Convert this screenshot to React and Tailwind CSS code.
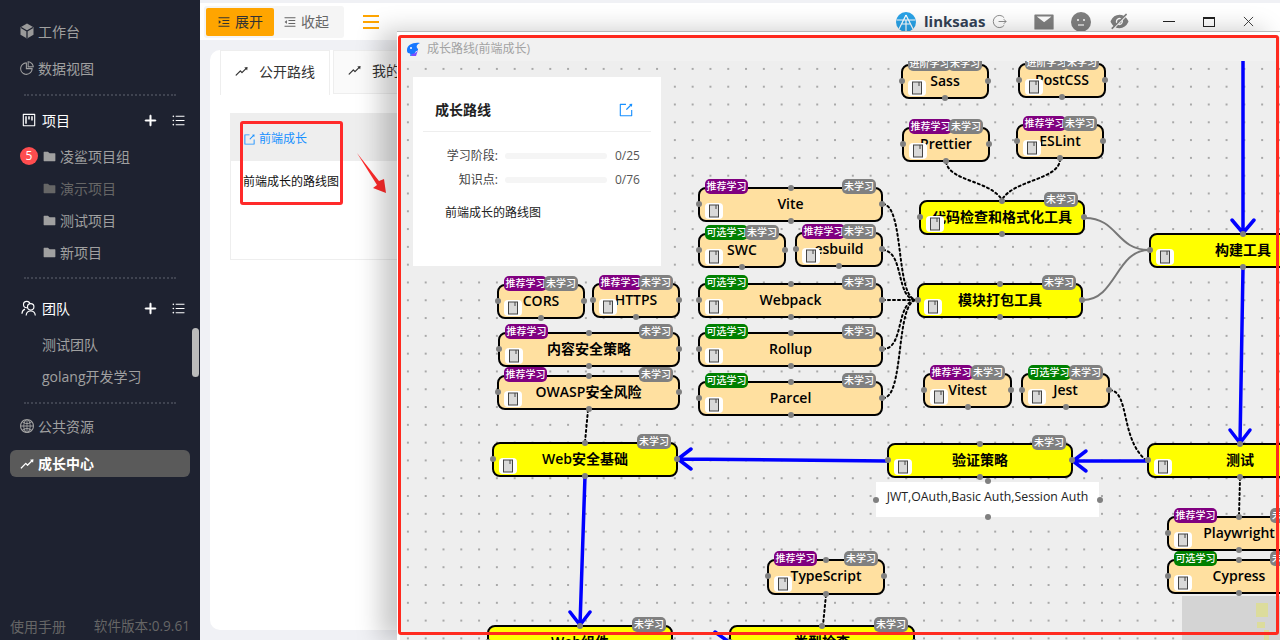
import React from "react";
import {
  AiFillFolder,
  AiFillMail,
  AiFillEyeInvisible,
  AiOutlineExport,
  AiOutlineGlobal,
  AiOutlineMenuFold,
  AiOutlineMenuUnfold,
  AiOutlinePieChart,
  AiOutlinePlus,
  AiOutlineProject,
  AiOutlineRise,
  AiOutlineUnorderedList,
} from "react-icons/ai";

const tagColor = {
  推荐学习: "bg-[#800080]",
  可选学习: "bg-[#008000]",
  进阶学习: "bg-[#808080]",
};

// page coordinates, the canvas subtracts its own origin
const nodes = [
  { t: "Sass", x: 901, y: 64, w: 88, h: 35, tag: "进阶学习" },
  { t: "PostCSS", x: 1018, y: 63, w: 88, h: 35, tag: "进阶学习" },
  { t: "Prettier", x: 902, y: 127, w: 88, h: 35, tag: "推荐学习" },
  { t: "ESLint", x: 1016, y: 124, w: 88, h: 35, tag: "推荐学习" },
  { t: "代码检查和格式化工具", x: 919, y: 200, w: 166, h: 35, main: true },
  { t: "构建工具", x: 1149, y: 233, w: 188, h: 35, main: true },
  { t: "Vite", x: 698, y: 187, w: 185, h: 35, tag: "推荐学习" },
  { t: "SWC", x: 698, y: 233, w: 88, h: 35, tag: "可选学习" },
  { t: "esbuild", x: 795, y: 232, w: 88, h: 35, tag: "推荐学习" },
  { t: "Webpack", x: 698, y: 283, w: 185, h: 35, tag: "可选学习" },
  { t: "Rollup", x: 698, y: 332, w: 185, h: 35, tag: "可选学习" },
  { t: "Parcel", x: 698, y: 381, w: 185, h: 35, tag: "可选学习" },
  { t: "模块打包工具", x: 917, y: 283, w: 166, h: 35, main: true },
  { t: "CORS", x: 497, y: 284, w: 88, h: 35, tag: "推荐学习" },
  { t: "HTTPS", x: 592, y: 283, w: 88, h: 35, tag: "推荐学习" },
  { t: "内容安全策略", x: 498, y: 332, w: 182, h: 35, tag: "推荐学习" },
  { t: "OWASP安全风险", x: 497, y: 375, w: 183, h: 35, tag: "推荐学习" },
  { t: "Vitest", x: 923, y: 373, w: 89, h: 35, tag: "推荐学习" },
  { t: "Jest", x: 1021, y: 373, w: 89, h: 35, tag: "可选学习" },
  { t: "Web安全基础", x: 492, y: 442, w: 186, h: 35, main: true },
  { t: "验证策略", x: 887, y: 443, w: 186, h: 35, main: true },
  { t: "测试", x: 1147, y: 443, w: 186, h: 35, main: true },
  { t: "Playwright", x: 1167, y: 516, w: 144, h: 35, tag: "推荐学习" },
  { t: "Cypress", x: 1167, y: 559, w: 144, h: 35, tag: "可选学习" },
  { t: "TypeScript", x: 767, y: 559, w: 118, h: 36, tag: "推荐学习" },
  { t: "Web组件", x: 487, y: 625, w: 186, h: 35, main: true },
  { t: "类型检查", x: 729, y: 625, w: 186, h: 35, main: true },
];

const Book = () => (
  <svg viewBox="0 0 18 16" className="block h-[16px] w-[18px]">
    <rect x="4.5" y="2" width="9" height="12" fill="#d9d9d9" stroke="#444" strokeWidth="1" />
    <path d="M11 2v4" stroke="#444" strokeWidth="1" />
  </svg>
);

const Handle = ({ className }) => (
  <span className={`absolute z-10 h-[6px] w-[6px] rounded-full bg-[#808080] ${className}`} />
);

const GraphNode = ({ n }) => (
  <div
    className={`absolute flex items-center justify-center rounded-[8px] border-2 border-black text-[14px] font-semibold text-black ${
      n.main ? "bg-[#ffff00]" : "bg-[#ffe0a0]"
    }`}
    style={{ left: n.x - 400, top: n.y - 61, width: n.w, height: n.h }}
  >
    <span className="-translate-y-px whitespace-nowrap leading-none">{n.t}</span>
    <Handle className="left-[-4px] top-[12px]" />
    <Handle className="right-[-4px] top-[12px]" />
    <Handle className="left-1/2 top-[-4px] -translate-x-1/2" />
    <Handle className="bottom-[-4px] left-1/2 -translate-x-1/2" />
    <span className="absolute bottom-[1px] left-[5px] z-10 rounded-[4px] bg-white">
      <Book />
    </span>
    {n.tag && (
      <span
        className={`absolute left-[5px] top-[-10px] z-20 flex h-[15px] w-[43px] items-center justify-center rounded-[5px] text-[10px] font-medium text-white ${tagColor[n.tag]}`}
      >
        {n.tag}
      </span>
    )}
    <span className="absolute right-[5px] top-[-10px] z-20 flex h-[15px] w-[34px] items-center justify-center rounded-[5px] bg-[#808080] text-[10px] font-medium text-white">
      未学习
    </span>
  </div>
);

const Edges = () => (
  <svg viewBox="400 61 880 579" className="absolute left-0 top-0 h-[579px] w-[880px]" fill="none">
    <g stroke="#000" strokeWidth="2" strokeDasharray="2 3" strokeLinecap="round">
      <path d="M946 162C950 182 990 180 1002 200" />
      <path d="M1060 159C1060 180 1012 180 1002 200" />
      <path d="M883 204C905 206 895 300 917 300" />
      <path d="M883 250C905 252 895 300 917 300" />
      <path d="M883 300H917" />
      <path d="M883 349C905 349 895 300 917 300" />
      <path d="M883 398C905 398 895 300 917 300" />
      <path d="M1110 390C1130 392 1120 440 1147 461" />
      <path d="M588 410L585 442" />
      <path d="M1240 478L1239 516" />
      <path d="M826 595L823 625" />
    </g>
    <g stroke="#777" strokeWidth="2">
      <path d="M1085 218C1118 218 1116 250 1149 250" />
      <path d="M1083 300C1116 300 1116 250 1149 250" />
    </g>
    <g stroke="#0000ff" strokeWidth="3.5" strokeLinecap="round" strokeLinejoin="round">
      <path d="M1243 61V233M1232 220L1243 233L1254 220" />
      <path d="M1243 268L1240 443M1230 430L1240 443L1250 430" />
      <path d="M1147 461H1073M1086 451L1073 461L1086 471" />
      <path d="M887 461L678 459M691 449L678 459L691 469" />
      <path d="M585 476L580 625M570 612L580 625L590 612" />
      <path d="M673 650L729 650M715 632L729 642" />
    </g>
  </svg>
);

const InfoPanel = () => (
  <div className="absolute left-[13px] top-[16px] z-30 h-[189px] w-[248px] bg-white px-[10px]">
    <div className="flex h-[55px] items-center justify-between border-b border-[#eeeeee] pl-[12px] pr-[17px] pt-[11px]">
      <span className="text-[14px] font-semibold text-[#222]">成长路线</span>
      <AiOutlineExport className="h-[16px] w-[16px] text-[#1890ff]" />
    </div>
    <div className="mt-[12px] flex h-[24px] items-center text-[12px] text-[#444]">
      <span className="w-[75px] text-right">学习阶段:</span>
      <span className="ml-[7px] h-[6px] w-[102px] rounded-full bg-[#f5f5f5]" />
      <span className="ml-[8px] text-[#555]">0/25</span>
    </div>
    <div className="flex h-[24px] items-center text-[12px] text-[#444]">
      <span className="w-[75px] text-right">知识点:</span>
      <span className="ml-[7px] h-[6px] w-[102px] rounded-full bg-[#f5f5f5]" />
      <span className="ml-[8px] text-[#555]">0/76</span>
    </div>
    <p className="ml-[22px] mt-[12px] text-[12px] text-[#222]">前端成长的路线图</p>
  </div>
);

const Note = () => (
  <div className="absolute left-[476px] top-[421px] z-10 flex h-[35px] w-[223px] items-start justify-center bg-white pt-[6px] text-[12.3px] text-[#222]">
    JWT,OAuth,Basic Auth,Session Auth
    <Handle className="right-[-4px] top-[15px]" />
    <Handle className="left-[-3px] top-[15px]" />
    <Handle className="left-1/2 top-[-4px] -translate-x-1/2" />
    <Handle className="bottom-[-3px] left-1/2 -translate-x-1/2" />
  </div>
);

const Minimap = () => (
  <div className="absolute left-[782px] top-[535px] z-40 h-[44px] w-[98px] bg-[#d4d4d4]">
    <div className="absolute left-[74px] top-[7px] h-[14px] w-[12px] bg-[#dcdc9c]" />
    <div className="absolute left-[75px] top-[26px] h-[6px] w-[8px] bg-[#dcdc9c]" />
    <div className="absolute left-[82px] top-[34px] h-[10px] w-[5px] bg-[#dcdc9c]" />
  </div>
);

const FlowWindow = () => (
  <div className="absolute left-[397px] top-[31px] z-40 flex h-[609px] w-[883px] flex-col border-t border-[#bbbbbb] bg-white pl-[3px] pt-[5px] shadow-[-16px_0_24px_rgba(0,0,0,0.22)]">
    <div className="flex h-[24px] items-center gap-[6px] bg-[#f1f1f1] pl-[5px] text-[12px] text-[#a3a3a3]">
      <svg viewBox="0 0 16 16" className="h-[16px] w-[16px]">
        <path d="M2 9C2 4 8 1 15 2C12 3 11 5 12 7C14 8 13 10 11 10C10 13 8 15 5 15C6 13 5 12 3 12C2 11 2 10 2 9Z" fill="#1677ff" />
        <path d="M6 13C9 13 11 12 13 9L11 15H7Z" fill="#7c4dff" />
        <circle cx="6" cy="7" r="1" fill="#fff" />
      </svg>
      <span>成长路线(前端成长)</span>
    </div>
    <div className="relative flex-1 overflow-hidden bg-[#eeeeee] bg-[radial-gradient(#a8a8a8_0.7px,transparent_0.9px)] bg-[size:17.8px_17.8px] bg-[position:-1px_-1px]">
      <Edges />
      {nodes.map((n) => (
        <GraphNode key={n.t} n={n} />
      ))}
      <Note />
      <InfoPanel />
      <Minimap />
    </div>
  </div>
);

const Divider = ({ className }) => (
  <div className={`mx-[24px] border-t-2 border-dotted border-[#3f4350] ${className}`} />
);

const NavItem = ({ icon, label, className }) => (
  <div className={`flex h-[28px] items-center gap-[3px] pl-[19px] text-[14px] text-[#a0a0a0] ${className}`}>
    {icon}
    <span>{label}</span>
  </div>
);

const GroupHead = ({ icon, label, className }) => (
  <div className={`flex h-[24px] items-center pl-[21px] pr-[14px] text-[14px] text-white ${className}`}>
    {icon}
    <span className="ml-[5px] flex-1">{label}</span>
    <AiOutlinePlus className="h-[15px] w-[15px] stroke-[60px]" />
    <AiOutlineUnorderedList className="ml-[13px] h-[15px] w-[15px]" />
  </div>
);

const Folder = ({ label, dim, badge }) => (
  <div className={`relative flex h-[32px] items-center pl-[42px] text-[14px] ${dim ? "text-[#666]" : "text-[#a0a0a0]"}`}>
    {badge && (
      <span className="absolute left-[20px] top-[7px] flex h-[18px] w-[18px] items-center justify-center rounded-full bg-[#ff4d4f] text-[12px] text-white">
        {badge}
      </span>
    )}
    <AiFillFolder className="mr-[3px] h-[15px] w-[15px]" />
    <span>{label}</span>
  </div>
);

const TeamIcon = () => (
  <svg viewBox="0 0 14 14" className="h-[16px] w-[16px]" fill="none" stroke="#fff" strokeWidth="1">
    <circle cx="5" cy="4" r="2.8" />
    <circle cx="8.5" cy="6" r="2.8" fill="#1e2230" />
    <path d="M0.8 12C1 9.5 2 8.5 3.5 8M4.5 13.5C4.7 10.8 6.5 9.6 8.5 9.6C10.5 9.6 12.3 10.8 12.5 13.5" />
  </svg>
);

const CubeIcon = () => (
  <svg viewBox="0 0 16 16" className="h-[16px] w-[16px]">
    <path d="M8 0.5L14.5 4.2V11.8L8 15.5L1.5 11.8V4.2Z" fill="#9a9a9a" />
    <path d="M2 4.5L8 8L14 4.5M8 8V15" stroke="#1e2230" strokeWidth="1.3" fill="none" />
  </svg>
);

const Sidebar = () => (
  <aside className="relative flex h-[640px] w-[200px] shrink-0 flex-col bg-[#1e2230] pt-[17px]">
    <NavItem icon={<CubeIcon />} label="工作台" className="mb-[9px]" />
    <NavItem icon={<AiOutlinePieChart className="h-[16px] w-[16px]" />} label="数据视图" />
    <Divider className="mt-[12px]" />
    <GroupHead icon={<AiOutlineProject className="h-[16px] w-[16px]" />} label="项目" className="mt-[12px]" />
    <div className="mt-[8px]">
      <Folder label="凌鲨项目组" badge="5" />
      <Folder label="演示项目" dim />
      <Folder label="测试项目" />
      <Folder label="新项目" />
    </div>
    <Divider className="mt-[9px]" />
    <GroupHead icon={<TeamIcon />} label="团队" className="mt-[17px]" />
    <div className="mt-[8px] text-[14px] text-[#a0a0a0]">
      <div className="flex h-[32px] items-center pl-[42px]">测试团队</div>
      <div className="flex h-[32px] items-center pl-[42px]">golang开发学习</div>
    </div>
    <Divider className="mt-[10px]" />
    <NavItem icon={<AiOutlineGlobal className="h-[16px] w-[16px]" />} label="公共资源" className="mt-[8px]" />
    <div className="mx-[10px] mt-[10px] flex h-[27px] items-center gap-[3px] rounded-[6px] bg-[#5a5a5a] pl-[9px] text-[14px] font-bold text-white">
      <AiOutlineRise className="h-[16px] w-[16px]" />
      成长中心
    </div>
    <div className="mt-auto flex h-[24px] items-start justify-between px-[10px] text-[14px] text-[#666]">
      <span>使用手册</span>
      <span className="text-[13.6px]">软件版本:0.9.61</span>
    </div>
    <div className="absolute left-[192px] top-[328px] h-[49px] w-[7px] rounded-full bg-[#bbbbbb]" />
  </aside>
);

const Header = () => (
  <header className="mt-[3px] flex h-[37px] items-center bg-white">
    <div className="ml-[4px] flex h-[32px] w-[140px] items-center rounded-[3px] bg-[#f5f5f5] p-[2px] text-[14px]">
      <button className="flex h-[28px] w-[68px] items-center justify-center gap-[4px] rounded-[2px] bg-[#ffa500] text-[#333]">
        <AiOutlineMenuUnfold className="h-[14px] w-[14px]" />
        展开
      </button>
      <button className="ml-[6px] flex h-[28px] w-[52px] items-center justify-center gap-[4px] text-[#666]">
        <AiOutlineMenuFold className="h-[14px] w-[14px]" />
        收起
      </button>
    </div>
    <div className="ml-[19px] flex w-[16px] flex-col gap-[4px]">
      <span className="h-[2px] bg-[#ffa500]" />
      <span className="h-[2px] bg-[#ffa500]" />
      <span className="h-[2px] bg-[#ffa500]" />
    </div>
    <svg viewBox="0 0 20 20" className="ml-[517px] h-[20px] w-[20px]">
      <circle cx="10" cy="10" r="10" fill="#29a3e8" />
      <path d="M1 8H19M10 3L3 17M10 3L17 17M6 12H14M10 8V19" stroke="#fff" strokeWidth="1.2" fill="none" />
    </svg>
    <span className="ml-[8px] w-[59px] whitespace-nowrap text-[15px] font-bold text-[#334155]">linksaas</span>
    <svg viewBox="0 0 16 16" className="ml-[9px] h-[15px] w-[15px]" fill="none" stroke="#888" strokeWidth="1">
      <path d="M13 4A6.5 6.5 0 1 0 13 12M7 8H15M12.5 5.5L15 8L12.5 10.5" />
    </svg>
    <AiFillMail className="ml-[26px] h-[22px] w-[22px] text-[#808080]" />
    <svg viewBox="0 0 20 20" className="ml-[16px] h-[20px] w-[20px]">
      <circle cx="10" cy="10" r="10" fill="#808080" />
      <circle cx="7" cy="8" r="1" fill="#fff" />
      <circle cx="13" cy="8" r="1" fill="#fff" />
      <path d="M7 13H13" stroke="#fff" strokeWidth="1.2" />
    </svg>
    <AiFillEyeInvisible className="ml-[18px] h-[21px] w-[21px] text-[#808080]" />
    <span className="ml-[33px] h-px w-[12px] bg-[#222]" />
    <span className="ml-[28px] h-[10px] w-[12px] border border-t-2 border-[#222]" />
    <svg viewBox="0 0 12 12" className="ml-[28px] h-[11px] w-[11px]" stroke="#333" strokeWidth="1">
      <path d="M1 1L11 11M11 1L1 11" />
    </svg>
  </header>
);

const Main = () => (
  <main className="flex min-w-0 flex-1 flex-col bg-[#f0f1f5]">
    <Header />
    <section className="ml-[10px] mt-[10px] h-[580px] rounded-l-[10px] bg-white">
      <div className="flex h-[45px] pl-[10px] text-[14px] text-[#333]">
        <div className="flex h-[45px] w-[110px] items-center gap-[10px] border-x border-t border-[#eeeeee] bg-white pb-[3px] pl-[13px]">
          <AiOutlineRise className="h-[15px] w-[15px]" />
          公开路线
        </div>
        <div className="ml-[3px] flex h-[44px] w-[120px] items-center gap-[10px] border border-[#eeeeee] bg-[#fafafa] pb-[3px] pl-[13px]">
          <AiOutlineRise className="h-[15px] w-[15px]" />
          我的路线
        </div>
      </div>
      <div className="ml-[20px] mt-[18px] h-[147px] w-[300px] border border-[#eeeeee]">
        <div className="flex h-[47px] items-center gap-[3px] bg-[#eeeeee] pl-[12px] pt-[3px] text-[12px] text-[#1890ff]">
          <AiOutlineExport className="h-[13px] w-[13px]" />
          前端成长
        </div>
        <p className="mt-[12px] pl-[12px] text-[12px] leading-[18px] text-[#111]">前端成长的路线图</p>
      </div>
    </section>
  </main>
);

const Annotations = () => (
  <>
    <div className="absolute left-[240px] top-[121px] z-30 h-[84px] w-[103px] rounded-[3px] border-[3px] border-[#ff2a2a]" />
    <svg viewBox="0 0 40 50" className="absolute left-[355px] top-[150px] z-30 h-[50px] w-[40px]">
      <path d="M2 3L24 31L29 29L31 43L18 38L22 35Z" fill="#ff2a2a" />
    </svg>
    <div className="absolute left-[398px] top-[35px] z-50 h-[600px] w-[881px] rounded-[3px] border-[3px] border-[#ff2a1f]" />
  </>
);

export default function App() {
  return (
    <div className="relative flex h-[640px] w-[1280px] overflow-hidden font-['Open_Sans','Noto_Sans_CJK_SC',sans-serif]">
      <Sidebar />
      <Main />
      <FlowWindow />
      <Annotations />
    </div>
  );
}
